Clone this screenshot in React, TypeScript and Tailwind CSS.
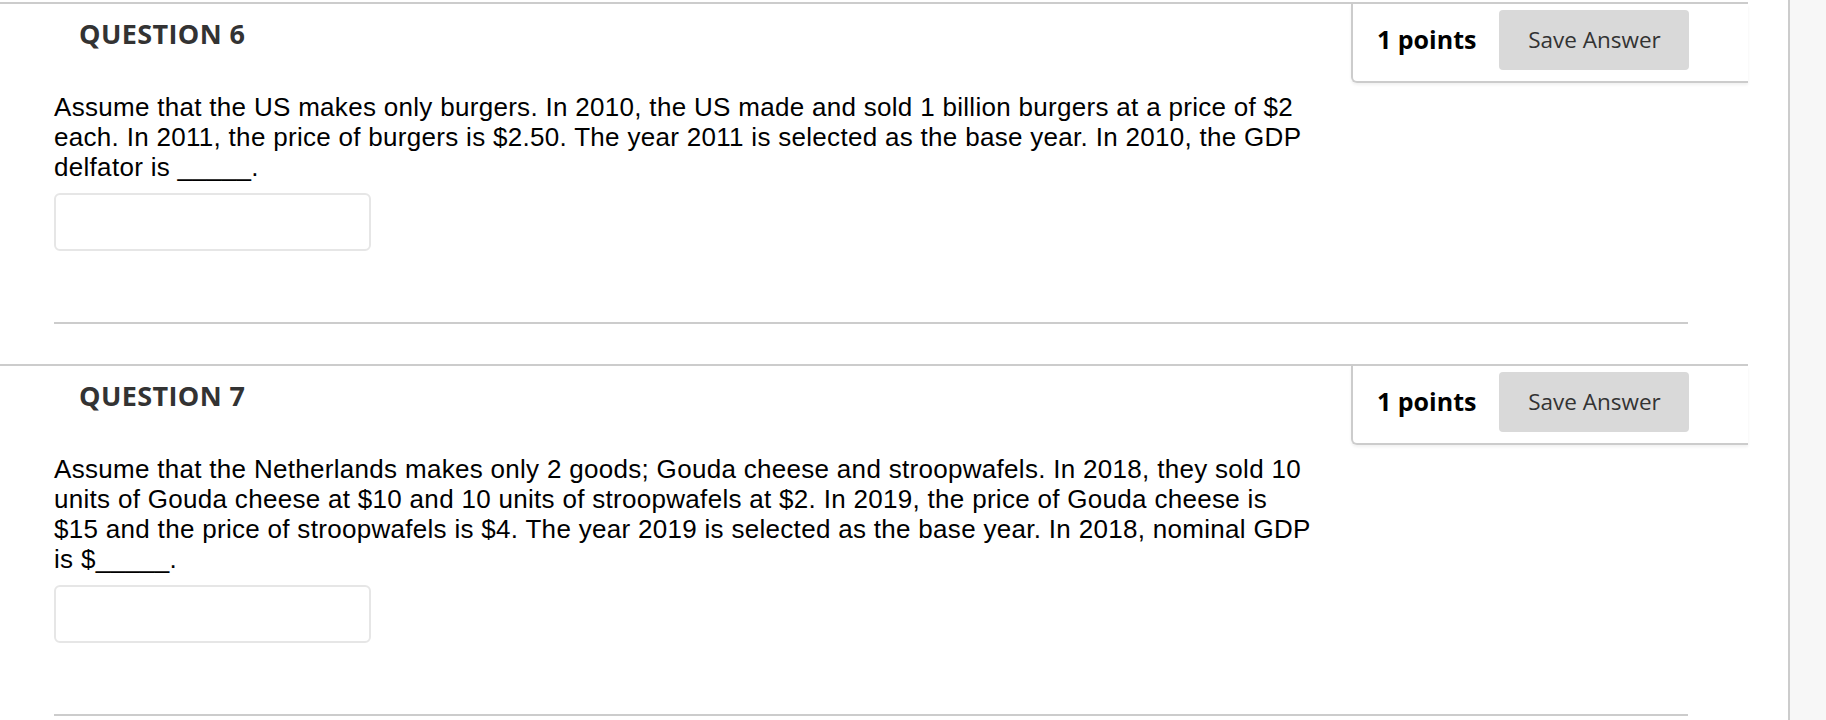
import React from 'react';

interface QuestionProps {
  number: number;
  points: number;
  text: React.ReactNode;
}

const Question = ({ number, points, text }: QuestionProps) => {
  return (
    <section className="border-t-2 border-[#cccccc] mr-[40px] pb-[40px]">
      <div className="flex justify-between items-start">
        <h2 className="pl-[79px] pt-[12px] text-[27px] leading-[36px] tracking-[0.4px] font-bold text-[#333333] font-['Open_Sans',sans-serif]">
          QUESTION {number}
        </h2>

        <div className="flex items-start h-[79px] w-[397px] pl-[24px] pt-[6px] border-l-2 border-b-2 border-[#cccccc] rounded-bl-[6px] shadow-[0_2px_3px_rgba(0,0,0,0.06)] font-['Open_Sans',sans-serif]">
          <span className="h-[60px] flex items-center text-[25px] font-bold text-black">
            {points} points
          </span>
          <button className="ml-[23px] h-[60px] w-[190px] rounded-[4px] bg-[#d9d9d9] text-[22.5px] text-[#333333]">
            Save Answer
          </button>
        </div>
      </div>

      <div className="pl-[54px] pt-[9px] pr-[60px]">
        <p className="w-[1259px] text-[26px] leading-[30px] tracking-[0.3px] text-black font-['Liberation_Sans',Arial,sans-serif]">
          {text}
        </p>
        <input
          type="text"
          className="mt-[11px] block w-[317px] h-[58px] rounded-[6px] border-2 border-[#e6e6e6] bg-white outline-none"
        />
        <div className="mt-[71px] border-t-2 border-[#cccccc]" />
      </div>
    </section>
  );
};

export default function App() {
  return (
    <div className="flex w-[1826px] h-[720px] overflow-hidden bg-white">
      <main className="flex-1 pt-[2px]">
        <Question
          number={6}
          points={1}
          text={
            <>
              Assume that the US makes only burgers. In 2010, the US made and
              sold 1 billion burgers at a price of $2 each. In 2011, the price
              of burgers is $2.50. The year 2011 is selected as the base year.
              In 2010, the GDP delfator is _____.
            </>
          }
        />
        <Question
          number={7}
          points={1}
          text={
            <>
              Assume that the Netherlands makes only 2 goods; Gouda cheese and
              stroopwafels. In 2018, they sold 10 units of Gouda cheese at $10
              and 10 units of stroopwafels at $2. In 2019, the price of Gouda
              cheese is $15 and the price of stroopwafels is $4. The year 2019
              is selected as the base year. In 2018, nominal GDP is $_____.
            </>
          }
        />
      </main>
      <aside className="w-[38px] shrink-0 border-l-2 border-[#cccccc] bg-[#f7f7f7]" />
    </div>
  );
}
